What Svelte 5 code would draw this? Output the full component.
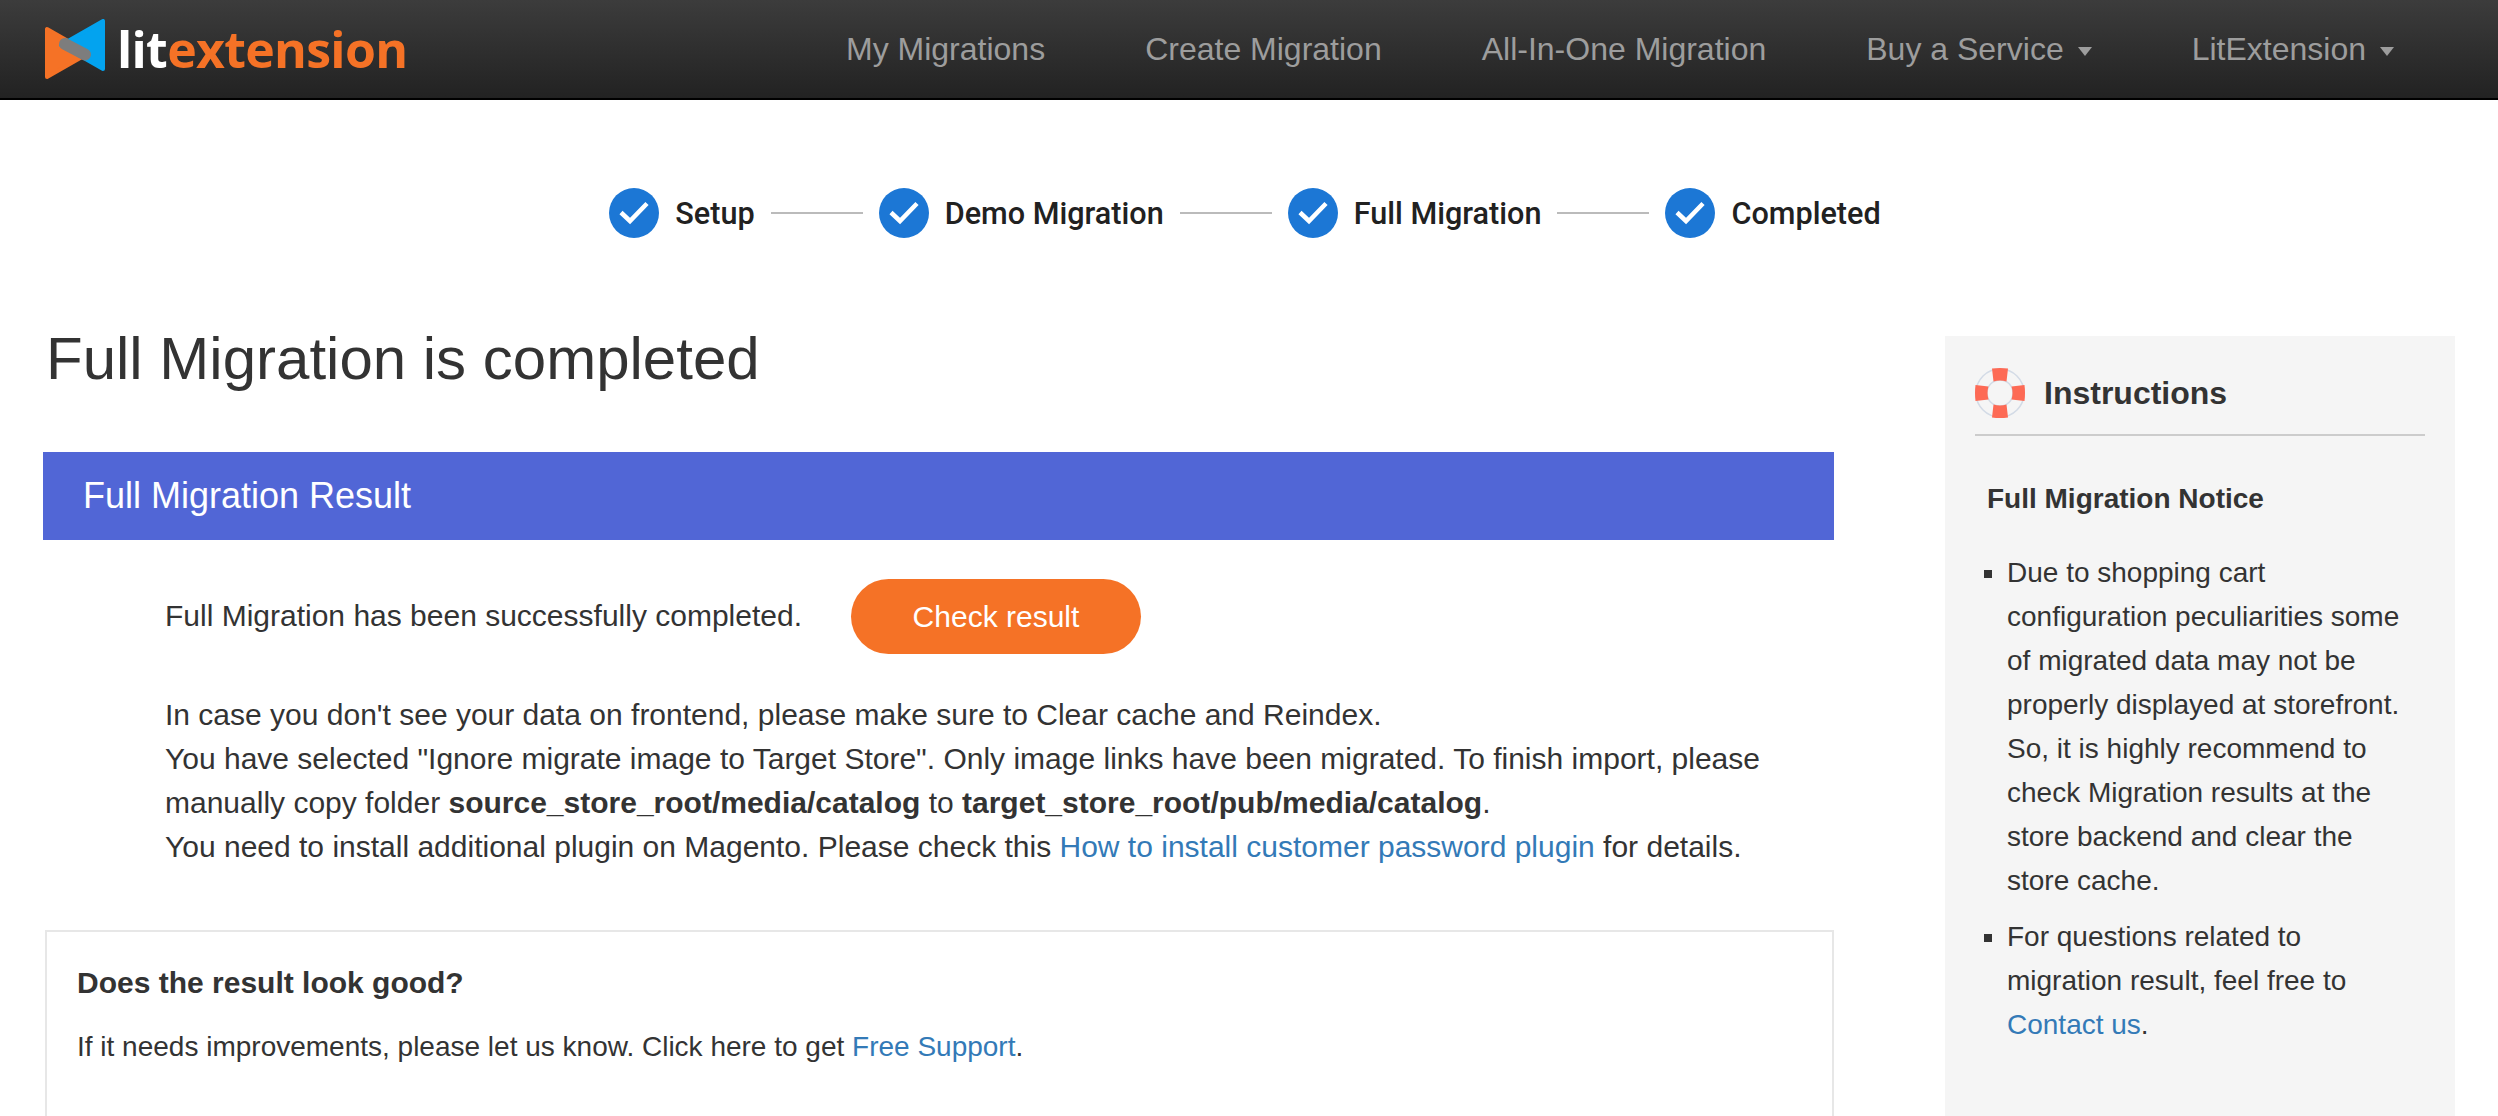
<script>
  const navLinks = [
    { label: 'My Migrations' },
    { label: 'Create Migration' },
    { label: 'All-In-One Migration' },
    { label: 'Buy a Service', caret: true },
    { label: 'LitExtension', caret: true },
  ];
  const steps = ['Setup', 'Demo Migration', 'Full Migration', 'Completed'];
</script>

<div class="page">
  <nav class="navbar">
    <a class="brand" href="#top">
      <svg class="logo" viewBox="0 0 60 60" width="60" height="60">
        <path d="M2 10 L2 58 L44 34 Z" fill="#f57226" stroke="#f57226" stroke-width="4" stroke-linejoin="round" />
        <path d="M58 2 L58 50 L16 26 Z" fill="#03a3ef" stroke="#03a3ef" stroke-width="4" stroke-linejoin="round" />
        <path d="M20 25 L40 35.5" fill="none" stroke="#7d7d7d" stroke-width="12" stroke-linecap="round" />
      </svg>
      <span class="brand-text"><span class="lit">lit</span><span class="ext">extension</span></span>
    </a>
    <ul class="nav-links">
      {#each navLinks as link}
        <li>{link.label}{#if link.caret}<span class="caret"></span>{/if}</li>
      {/each}
    </ul>
  </nav>

  <div class="steps">
    {#each steps as step, i}
      {#if i > 0}<span class="step-line"></span>{/if}
      <div class="step">
        <svg viewBox="0 0 50 50" width="50" height="50">
          <circle cx="25" cy="25" r="25" fill="#1c77d5" />
          <path d="M12 24.5 L21 33 L38 15.5" fill="none" stroke="#fff" stroke-width="4.5" />
        </svg>
        <span>{step}</span>
      </div>
    {/each}
  </div>

  <div class="content">
    <main class="main">
      <h1>Full Migration is completed</h1>
      <div class="result-bar">Full Migration Result</div>
      <div class="result-body">
        <div class="done-row">
          <span>Full Migration has been successfully completed.</span>
          <button class="check">Check result</button>
        </div>
        <p>
          In case you don't see your data on frontend, please make sure to Clear cache and Reindex.<br />
          You have selected "Ignore migrate image to Target Store". Only image links have been migrated. To finish import, please manually copy folder <b>source_store_root/media/catalog</b> to <b>target_store_root/pub/media/catalog</b>.<br />
          You need to install additional plugin on Magento. Please check this <a href="#top">How to install customer password plugin</a> for details.
        </p>
      </div>
      <div class="feedback">
        <h4>Does the result look good?</h4>
        <p>If it needs improvements, please let us know. Click here to get <a href="#top">Free Support</a>.</p>
      </div>
    </main>

    <aside class="sidebar">
      <div class="side-head">
        <svg viewBox="0 0 50 50" width="50" height="50">
          <circle cx="25" cy="25" r="24" fill="none" stroke="#d3dbe6" stroke-width="1.5" />
          <circle cx="25" cy="25" r="13" fill="none" stroke="#d3dbe6" stroke-width="1.5" />
          <g fill="#fd6a55">
            <path d="M17 0.5 Q25 -0.5 33 0.5 L31.5 13.5 Q25 11.5 18.5 13.5 Z" />
            <path d="M17 49.5 Q25 50.5 33 49.5 L31.5 36.5 Q25 38.5 18.5 36.5 Z" />
            <path d="M0.5 17 Q-0.5 25 0.5 33 L13.5 31.5 Q11.5 25 13.5 18.5 Z" />
            <path d="M49.5 17 Q50.5 25 49.5 33 L36.5 31.5 Q38.5 25 36.5 18.5 Z" />
          </g>
        </svg>
        <h3>Instructions</h3>
      </div>
      <h5>Full Migration Notice</h5>
      <ul>
        <li>Due to shopping cart configuration peculiarities some of migrated data may not be properly displayed at storefront. So, it is highly recommend to check Migration results at the store backend and clear the store cache.</li>
        <li>For questions related to migration result, feel free to <a href="#top">Contact us</a>.</li>
      </ul>
    </aside>
  </div>
</div>

<style>
  :global(body) {
    margin: 0;
    background: #fff;
    font-family: 'Liberation Sans', Arial, sans-serif;
    color: #333;
  }
  .page {
    height: 1116px;
    overflow: hidden;
  }
  a {
    color: #337ab7;
    text-decoration: none;
  }

  .navbar {
    height: 98px;
    border-bottom: 2px solid #000;
    background: linear-gradient(#3c3c3c, #222);
    display: flex;
    justify-content: space-between;
    align-items: center;
  }
  .brand {
    display: flex;
    align-items: center;
    margin-left: 45px;
  }
  .logo {
    display: block;
  }
  .brand-text {
    font-family: 'Open Sans', sans-serif;
    font-weight: 700;
    font-size: 50px;
    line-height: 1;
    margin-left: 12px;
    letter-spacing: -0.7px;
  }
  .lit {
    color: #fff;
  }
  .ext {
    color: #f57226;
  }
  .nav-links {
    display: flex;
    list-style: none;
    margin: 0;
    padding: 0 104px 0 0;
    gap: 100px;
    font-size: 32px;
    color: #9d9d9d;
  }
  .caret {
    display: inline-block;
    margin-left: 14px;
    vertical-align: middle;
    border-top: 9px solid #9d9d9d;
    border-left: 7.5px solid transparent;
    border-right: 7.5px solid transparent;
  }

  .steps {
    display: flex;
    justify-content: center;
    align-items: center;
    gap: 16px;
    margin-top: 88px;
    padding-right: 8px;
    height: 50px;
    font-family: Roboto, sans-serif;
    font-weight: 500;
    font-size: 30.6px;
    color: #212121;
  }
  .step {
    display: flex;
    align-items: center;
    gap: 16px;
  }
  .step svg {
    display: block;
  }
  .step-line {
    width: 92px;
    height: 2px;
    background: #bbb;
  }

  .content {
    display: flex;
    align-items: flex-start;
    padding: 0 43px;
    justify-content: space-between;
    margin-top: 63px;
  }
  .main {
    width: 1791px;
  }
  h1 {
    font-weight: 400;
    font-size: 60px;
    line-height: 66px;
    margin: 25px 0 60px 3px;
  }
  .result-bar {
    height: 88px;
    line-height: 88px;
    background: #5166d6;
    color: #fff;
    font-size: 36px;
    padding-left: 40px;
  }
  .result-body {
    padding: 39px 60px 0 122px;
    font-size: 30px;
    line-height: 44px;
  }
  .done-row {
    display: flex;
    align-items: center;
    gap: 49px;
  }
  .done-row span {
    margin-top: -2px;
  }
  .check {
    width: 290px;
    height: 75px;
    border: 0;
    border-radius: 38px;
    background: #f57226;
    color: #fff;
    font: inherit;
  }
  .result-body p {
    margin: 39px 0 0;
  }
  .feedback {
    margin-top: 61px;
    border: 2px solid #e7e7e7;
    padding: 31px 30px 90px;
    font-size: 28px;
    margin-left: 2px;
  }
  .feedback h4 {
    margin: 0;
    font-size: 30px;
    line-height: 40px;
  }
  .feedback p {
    margin: 28px 0 0;
  }

  .sidebar {
    width: 510px;
    background: #f5f5f5;
    margin-top: 35px;
    padding: 32px 30px 120px;
    box-sizing: border-box;
    font-size: 28px;
    line-height: 44px;
    min-height: 900px;
  }
  .side-head {
    display: flex;
    align-items: center;
    gap: 19px;
    padding-bottom: 16px;
    border-bottom: 2px solid #ccc;
  }
  .side-head svg {
    display: block;
  }
  .side-head h3 {
    margin: 0;
    font-size: 32px;
    line-height: 50px;
    font-weight: 700;
  }
  .sidebar h5 {
    margin: 41px 0 0 12px;
    font-size: 28px;
    line-height: 44px;
  }
  .sidebar ul {
    list-style: square;
    margin: 30px 0 0;
    padding: 0 15px 0 32px;
  }
  .sidebar li {
    margin-bottom: 12px;
  }
</style>
